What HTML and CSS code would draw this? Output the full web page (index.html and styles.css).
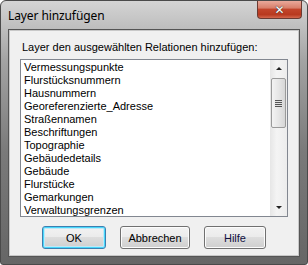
FILE: index.html
```html
<!DOCTYPE html>
<html lang="de">
<head>
  <meta charset="UTF-8">
  <title>Layer hinzufügen</title>
  <link rel="stylesheet" href="styles.css">
</head>
<body>
  <div class="window">
    <div class="titlebar">
      <span class="title">Layer hinzufügen</span>
      <span class="close">✕</span>
    </div>
    <div class="client">
      <p class="label">Layer den ausgewählten Relationen hinzufügen:</p>
      <div class="listbox">
        <ul class="items">
          <li>Vermessungspunkte</li>
          <li>Flurstücksnummern</li>
          <li>Hausnummern</li>
          <li>Georeferenzierte_Adresse</li>
          <li>Straßennamen</li>
          <li>Beschriftungen</li>
          <li>Topographie</li>
          <li>Gebäudedetails</li>
          <li>Gebäude</li>
          <li>Flurstücke</li>
          <li>Gemarkungen</li>
          <li>Verwaltungsgrenzen</li>
        </ul>
        <div class="scrollbar">
          <span class="arrow up"></span>
          <span class="thumb"><i class="grip"></i></span>
          <span class="track"></span>
          <span class="arrow down"></span>
        </div>
      </div>
      <div class="buttons">
        <button class="btn ok">OK</button>
        <button class="btn cancel">Abbrechen</button>
        <button class="btn help">Hilfe</button>
      </div>
    </div>
  </div>
</body>
</html>
```

FILE: styles.css
```css
html, body{ margin: 0; padding: 0; background: #fff;}
.window{ width: 308px; height: 265px; box-sizing: border-box; border: 1px solid #4a4a4a; border-radius: 6px 6px 3px 3px;
  background: linear-gradient(to bottom, #d4d4d4 0, #c4c4c4 20px, #a3a3a3 60px, #7a7a7a 150px, #666 100%);
  padding: 0 7px 7px; display: flex; flex-direction: column;}
.titlebar{ height: 28px; display: flex; justify-content: space-between; align-items: flex-start;}
.title{ font: 12px "Noto Sans", "Liberation Sans", sans-serif; color: #000; margin-top: 6px; letter-spacing: -0.1px;}
.close{ width: 45px; height: 18px; margin-right: -2px; box-sizing: border-box; border: 1px solid #6b3a32; border-top: none;
  border-radius: 0 0 4px 4px; color: #fff; font: bold 12px "DejaVu Sans", sans-serif; text-align: center; line-height: 18px;
  background: linear-gradient(to bottom, #e9a99b 0, #d8806c 40%, #c2442b 50%, #b8391f 80%, #d4674d 100%);
  text-shadow: 0 0 1px #333, 0 0 1px #333;}
.client{ flex: 1; background: #f0f0f0; border: 1px solid #555; box-shadow: 0 0 0 1px #c8c8c8 inset;
  font: 11px "Liberation Sans", Arial, sans-serif; color: #000;}
.label{ margin: 11px 0 0 13px; line-height: 13px; height: 13px;}
.listbox{ margin: 5px 0 0 11px; width: 268px; height: 158px; box-sizing: border-box; border: 1px solid #828790;
  background: #fff; display: flex; overflow: hidden;}
.items{ list-style: none; margin: 0; padding: 1px 0 0 3px; flex: 1; overflow: hidden;}
.items li{ height: 13px; line-height: 13px; white-space: nowrap;}
.scrollbar{ width: 17px; display: flex; flex-direction: column; background: linear-gradient(to right, #e6e6e6, #f4f4f4 40%, #ececec);}
.arrow{ height: 17px; display: flex; align-items: center; justify-content: center;}
.arrow::after{ content: ""; border-left: 3px solid transparent; border-right: 3px solid transparent;}
.arrow.up::after{ border-bottom: 3px solid #222;}
.arrow.down::after{ border-top: 3px solid #222;}
.thumb{ height: 50px; margin: 1px 1px 0; box-sizing: border-box; border: 1px solid #9a9a9a; border-radius: 2px;
  background: linear-gradient(to right, #f3f3f3, #e6e6e6 50%, #d6d6d6); display: flex; align-items: center; justify-content: center;}
.grip{ width: 7px; height: 7px; background: repeating-linear-gradient(to bottom, #555 0, #555 1px, #e0e0e0 1px, #e0e0e0 2px);}
.track{ flex: 1;}
.buttons{ display: flex; gap: 14px; margin: 9px 0 0 33px;}
.btn{ height: 23px; padding: 0; font: 11px "Liberation Sans", Arial, sans-serif; color: #000; border: 1px solid #707070; border-radius: 3px;
  background: linear-gradient(to bottom, #f2f2f2 0, #ebebeb 50%, #dddddd 50%, #cfcfcf 100%);
  box-shadow: inset 0 0 0 1px #fcfcfc;}
.ok{ width: 64px; border-color: #3c7fb1; box-shadow: inset 0 0 0 1px #48d8fb, inset 0 0 0 2px #c0e8f8;}
.cancel{ width: 70px;}
.help{ width: 62px; color: #101040;}
```
